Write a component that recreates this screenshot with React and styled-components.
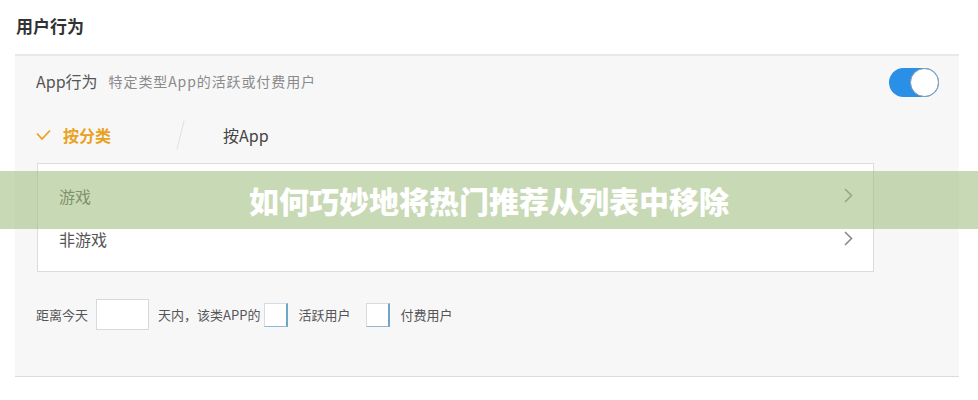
import React from "react";
import styled, { createGlobalStyle } from "styled-components";

const Global = createGlobalStyle`
  html, body { margin: 0; padding: 0; background: #fff; }
  body { font-family: "Noto Sans CJK SC", "Noto Sans", sans-serif; color: #333; }
  * { box-sizing: border-box; }
`;

const Page = styled.div`
  position: relative;
  width: 978px;
  height: 400px;
  overflow: hidden;
  background: #fff;
`;

const Title = styled.h2`
  margin: 0;
  padding: 14px 0 0 16px;
  height: 54px;
  font-size: 17px;
  line-height: 24px;
  font-weight: 700;
  color: #333;
`;

const Panel = styled.section`
  width: 944px;
  margin-left: 15px;
  background: #f7f7f8;
  border-top: 2px solid #e7e8ea;
  border-bottom: 1px solid #dcdcdc;
  padding: 12px 20px 46px 21px;
`;

const Header = styled.div`
  display: flex;
  align-items: center;
  height: 29px;
`;

const HeaderTitle = styled.span`
  font-size: 16px;
  color: #555;
  margin-right: 11px;
  padding-bottom: 3px;
`;

const HeaderSub = styled.span`
  font-size: 14px;
  letter-spacing: 0.9px;
  color: #8a8a8a;
  flex: 1;
  padding-bottom: 3px;
`;

const Toggle = styled.div`
  position: relative;
  width: 50px;
  height: 29px;
  border-radius: 15px;
  background: #2a8fe6;
`;

const Knob = styled.div`
  position: absolute;
  right: 0;
  top: 0;
  width: 29px;
  height: 29px;
  border-radius: 50%;
  background: #fff;
  border: 1px solid #7d97ae;
`;

const Tabs = styled.div`
  display: flex;
  align-items: center;
  height: 32px;
  margin-top: 22px;
`;

const Tab = styled.div`
  display: flex;
  align-items: center;
  gap: 12px;
  font-size: 16px;
  font-weight: ${(p) => (p.$active ? 700 : 400)};
  color: ${(p) => (p.$active ? "#e9a21f" : "#444")};
`;

const Slash = styled.div`
  width: 1px;
  height: 30px;
  background: #dfe1e4;
  transform: rotate(14deg);
  margin: 0 42px 0 69px;
`;

const List = styled.div`
  margin-top: 12px;
  margin-left: 1px;
  width: 837px;
  background: #fff;
  border: 1px solid #dcdcdc;
  padding: 10px 0 11px;
`;

const Row = styled.div`
  display: flex;
  align-items: center;
  justify-content: space-between;
  height: 43px;
  padding: 0 20px 0 21px;
  font-size: 16px;
  color: #555;
`;

const Filter = styled.div`
  display: flex;
  align-items: center;
  margin-top: 27px;
  font-size: 13px;
  color: #555;
`;

const Label = styled.span`
  margin-right: ${(p) => p.$gap}px;
`;

const DayInput = styled.div`
  width: 53px;
  height: 31px;
  background: #fff;
  border: 1px solid #d9d9d9;
  margin-right: 9px;
`;

const Check = styled.div`
  width: 24px;
  height: 24px;
  background: #fff;
  border: 1px solid #d6dde2;
  border-right: 2px solid #6ea7c6;
  border-bottom: 1px solid #8fb8cf;
  margin-right: 10px;
`;

const Banner = styled.div`
  position: absolute;
  left: 0;
  right: 0;
  top: 171px;
  height: 58px;
  background: rgba(160, 190, 128, 0.58);
  display: flex;
  align-items: center;
  justify-content: center;
  font-size: 30px;
  font-weight: 900;
  color: #fff;
`;

const CheckMark = () => (
  <svg width="15" height="12" viewBox="0 0 15 12" fill="none">
    <path d="M1 4.5 L6 10 L14 1.5" stroke="#e9a21f" strokeWidth="1.8" />
  </svg>
);

const Chevron = () => (
  <svg width="9" height="15" viewBox="0 0 9 15" fill="none">
    <path d="M1 1 L7.5 7.5 L1 14" stroke="#8a8a8a" strokeWidth="1.6" />
  </svg>
);

export default function App() {
  return (
    <Page>
      <Global />
      <Title>用户行为</Title>
      <Panel>
        <Header>
          <HeaderTitle>App行为</HeaderTitle>
          <HeaderSub>特定类型App的活跃或付费用户</HeaderSub>
          <Toggle>
            <Knob />
          </Toggle>
        </Header>
        <Tabs>
          <Tab $active>
            <CheckMark />
            按分类
          </Tab>
          <Slash />
          <Tab>按App</Tab>
        </Tabs>
        <List>
          <Row>
            游戏
            <Chevron />
          </Row>
          <Row>
            非游戏
            <Chevron />
          </Row>
        </List>
        <Filter>
          <Label $gap={8}>距离今天</Label>
          <DayInput />
          <Label $gap={4}>天内，该类APP的</Label>
          <Check />
          <Label $gap={16}>活跃用户</Label>
          <Check />
          <Label $gap={0}>付费用户</Label>
        </Filter>
      </Panel>
      <Banner>如何巧妙地将热门推荐从列表中移除</Banner>
    </Page>
  );
}
